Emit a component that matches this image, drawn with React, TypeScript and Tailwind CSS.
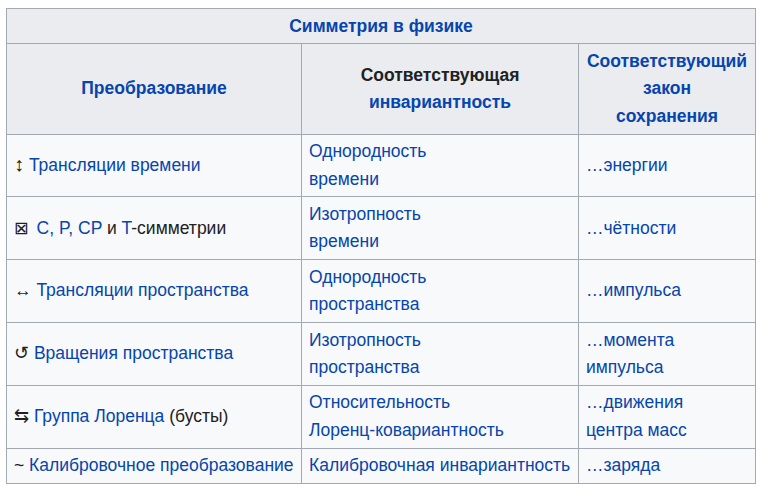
const link = 'text-[#0645ad]'
const box = "font-['DejaVu_Sans',sans-serif] mr-[3px]"

type Row = {
  left: React.ReactNode
  mid: React.ReactNode
  right: React.ReactNode
}

const rows: Row[] = [
  {
    left: (
      <>
        <span className="text-[20px]">↕</span> <span className={link}>Трансляции времени</span>
      </>
    ),
    mid: (
      <span className={link}>
        Однородность
        <br />
        времени
      </span>
    ),
    right: <span className={link}>…энергии</span>,
  },
  {
    left: (
      <>
        <span className={box}>⊠</span> <span className={link}>C, P, CP</span> и{' '}
        <span className={link}>T</span>-симметрии
      </>
    ),
    mid: (
      <span className={link}>
        Изотропность
        <br />
        времени
      </span>
    ),
    right: <span className={link}>…чётности</span>,
  },
  {
    left: (
      <>
        ↔ <span className={link}>Трансляции пространства</span>
      </>
    ),
    mid: (
      <span className={link}>
        Однородность
        <br />
        пространства
      </span>
    ),
    right: <span className={link}>…импульса</span>,
  },
  {
    left: (
      <>
        ↺ <span className={link}>Вращения пространства</span>
      </>
    ),
    mid: (
      <span className={link}>
        Изотропность
        <br />
        пространства
      </span>
    ),
    right: (
      <span className={link}>
        …момента
        <br />
        импульса
      </span>
    ),
  },
  {
    left: (
      <>
        ⇆ <span className={link}>Группа Лоренца</span> (бусты)
      </>
    ),
    mid: (
      <span className={link}>
        Относительность
        <br />
        Лоренц-ковариантность
      </span>
    ),
    right: (
      <span className={link}>
        …движения
        <br />
        центра масс
      </span>
    ),
  },
  {
    left: (
      <>
        ~ <span className={link}>Калибровочное преобразование</span>
      </>
    ),
    mid: <span className={link}>Калибровочная инвариантность</span>,
    right: <span className={link}>…заряда</span>,
  },
]

const th = 'border border-[#a2a9b1] bg-[#eaecf0] px-[7px] py-[3.5px] text-center font-bold'
const td = 'border border-[#a2a9b1] px-[7px] py-[3.5px] align-middle whitespace-nowrap'

export default function App() {
  return (
    <div className="min-h-screen bg-white pt-[8px] pl-[6px] font-['Liberation_Sans',Arial,sans-serif] text-[17.5px] leading-[27.4px] text-[#202122]">
      <table className="w-[749px] table-fixed border-collapse bg-[#f8f9fa]">
        <colgroup>
          <col className="w-[295px]" />
          <col className="w-[277px]" />
          <col className="w-[177px]" />
        </colgroup>
        <thead>
          <tr>
            <th colSpan={3} className={th}>
              <span className={link}>Симметрия в физике</span>
            </th>
          </tr>
          <tr>
            <th className={th}>
              <span className={link}>Преобразование</span>
            </th>
            <th className={th}>
              Соответствующая
              <br />
              <span className={link}>инвариантность</span>
            </th>
            <th className={th}>
              <span className={link}>
                Соответствующий
                <br />
                закон
                <br />
                сохранения
              </span>
            </th>
          </tr>
        </thead>
        <tbody>
          {rows.map((r, i) => (
            <tr key={i}>
              <td className={td}>{r.left}</td>
              <td className={td}>{r.mid}</td>
              <td className={td}>{r.right}</td>
            </tr>
          ))}
        </tbody>
      </table>
    </div>
  )
}
